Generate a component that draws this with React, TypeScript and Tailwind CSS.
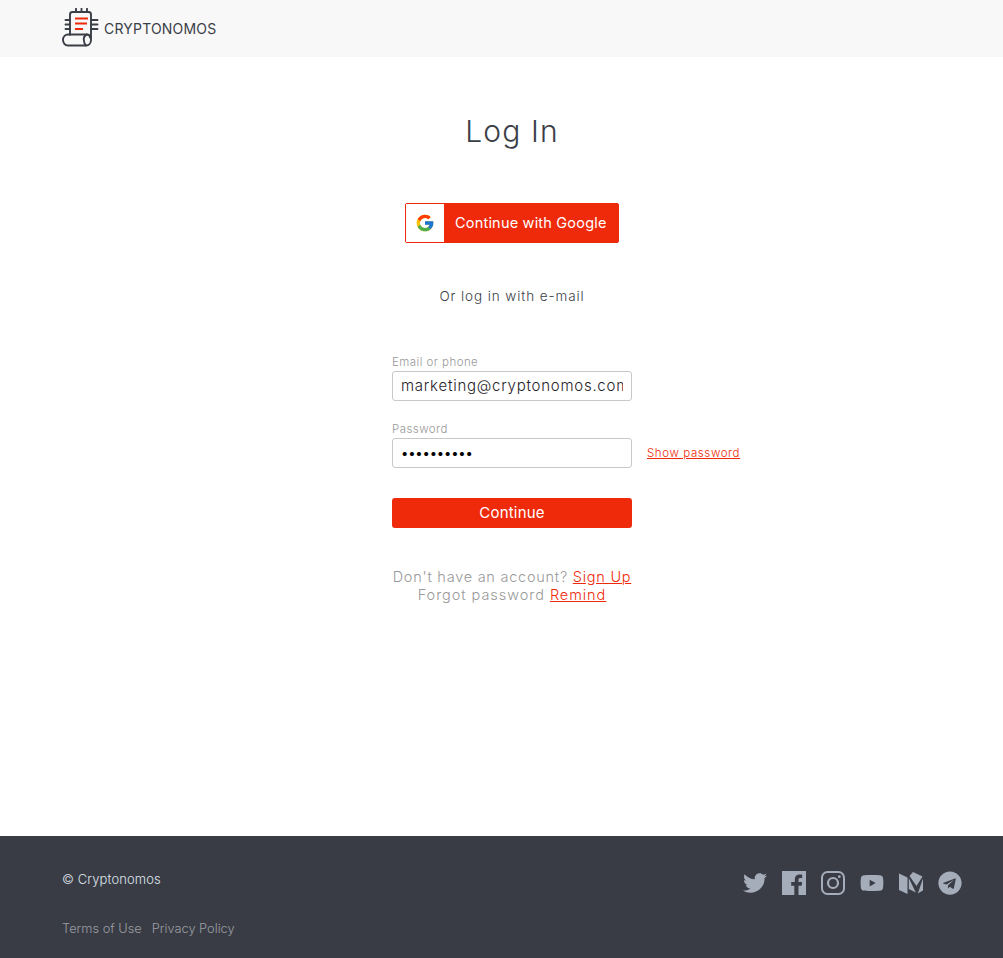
import React from "react";
import { FaTwitter, FaYoutube, FaTelegram } from "react-icons/fa";
import { FcGoogle } from "react-icons/fc";

const Logo = () => (
  <svg width="37" height="39" viewBox="0 0 37 39" fill="none" stroke="#3a3e47" strokeWidth="1.9" strokeLinecap="round" strokeLinejoin="round">
    <path d="M8 27V6.500C8 5 9 4 10.500 4h16C28 4 29 5 29 6.500V32c0 3-2 5.500-5 5.500H6C3 37.500 1 35 1 32s2-5.500 5-5.500h19c2 0 3 1.500 3 3" />
    <path d="M25 26.500c-2.500 1-3.500 3-3.200 5.500.2 2.500 1 4.500 2.200 5.500" />
    <path d="M14 .8V4M19.500 .8V4M25 .8V4M3.500 12H8M3.500 16.500H8M3.500 21H8M29 12h6.500M29 16.500h6.500M29 21h6.500" />
    <path d="M13 10.500h13M13 15.500h12M13 21h8" stroke="#ee2a0a" strokeWidth="2.200" strokeLinecap="butt" />
  </svg>
);

const Facebook = () => (
  <svg width="24" height="24" viewBox="0 0 24 24">
    <path fill="#a6adba" fillRule="evenodd" d="M0 0h24v24H16.500v-9.300h3.100l.5-3.600h-3.600V8.800c0-1 .3-1.800 1.800-1.800h1.900V3.800c-.4 0-1.500-.2-2.800-.2-2.700 0-4.600 1.700-4.600 4.700v2.800H9.200v3.600h3.100V24H0Z" />
  </svg>
);

const Instagram = () => (
  <svg width="24" height="24" viewBox="0 0 24 24" fill="none" stroke="#a6adba" strokeWidth="2">
    <rect x="1" y="1" width="22" height="22" rx="5.500" />
    <circle cx="12" cy="12" r="5" strokeWidth="2.200" />
    <circle cx="18.300" cy="5.700" r="1.400" fill="#a6adba" stroke="none" />
  </svg>
);

const Medium = () => (
  <svg width="24" height="22" viewBox="0 0 24 22" fill="#a6adba">
    <path d="M0 1.500 8.500 5.500V22L0 18Z" />
    <path d="M9.800 6 16.800 20.500 9.800 17Z" />
    <path d="M10.500 4 14 0l9.500 4.500-6 9.500Z" />
    <path d="M24 6.500V18.500L18.800 21.500 24 6.500Z" />
  </svg>
);

export default function App() {
  return (
    <div className="flex min-h-[958px] flex-col bg-white font-['Inter','Liberation_Sans',sans-serif]">
      <header className="flex h-[57px] items-start bg-[#f8f8f8] pt-2 pl-[62px]">
        <Logo />
        <span className="mt-[12px] ml-[5px] text-[14px] leading-[18px] font-normal tracking-[0.2px] text-[#3a3e47]">CRYPTONOMOS</span>
      </header>

      <main className="flex flex-1 flex-col items-center pl-[21px]">
        <h1 className="mt-[54px] text-[30px] leading-[40px] font-light tracking-[1.1px] text-[#3a3e47]">Log In</h1>

        <button className="mt-[52px] flex h-10 w-[214px] items-center rounded-[2px] border border-[#ee2a0a] bg-[#ee2a0a] text-[14.500px] font-normal tracking-[0.2px] text-white">
          <span className="flex h-[38px] w-[38px] shrink-0 items-center justify-center bg-white">
            <FcGoogle size={20} />
          </span>
          <span className="ml-[11px] whitespace-nowrap">Continue with Google</span>
        </button>

        <p className="mt-[43px] text-[13.500px] leading-5 font-light tracking-[0.9px] text-[#3a3e47]">Or log in with e-mail</p>

        <form className="mt-[49px] w-[240px]">
          <label className="block text-[11.500px] leading-[14px] font-light tracking-[0.45px] text-[#999999]">Email or phone</label>
          <div className="mt-[2px] flex h-[30px] items-center overflow-hidden rounded-[3px] border border-[#c8c8c8] pr-2 pl-2">
            <span className="overflow-hidden text-[15px] font-light tracking-[0.75px] whitespace-nowrap text-[#1f2228]">marketing@cryptonomos.com</span>
          </div>

          <div className="relative">
            <label className="mt-[21px] block text-[11.500px] leading-[14px] font-light tracking-[0.45px] text-[#999999]">Password</label>
            <div className="mt-[2px] flex h-[30px] items-center rounded-[3px] border border-[#c8c8c8] pl-2">
              <span className="text-[13px] leading-none tracking-[-0.15px] text-black">••••••••••</span>
            </div>
            <a className="absolute top-[24px] left-[255px] text-[11.500px] leading-[14px] font-light tracking-[0.6px] whitespace-nowrap text-[#ee2a0a] underline">Show password</a>
          </div>

          <button type="button" className="mt-[30px] flex h-[30px] w-full items-center justify-center rounded-[3px] bg-[#ee2a0a] text-[15px] tracking-[0.2px] text-white">Continue</button>
        </form>

        <div className="mt-[40px] text-center text-[14.500px] leading-[18px] font-light tracking-[0.75px] text-[#999999]">
          <p>Don't have an account? <a className="text-[#ee2a0a] underline">Sign Up</a></p>
          <p className="tracking-[0.95px]">Forgot password <a className="text-[#ee2a0a] underline">Remind</a></p>
        </div>
      </main>

      <footer className="flex h-[122px] justify-between bg-[#393c45] pr-[41px] pl-[62px]">
        <div>
          <p className="mt-[34px] text-[13px] leading-[18px] font-light tracking-[0.1px] text-[#dfe3ea]">© Cryptonomos</p>
          <div className="mt-[32px] flex gap-[10px] text-[12.800px] leading-[18px] font-light text-[#9a9ca2]">
            <a>Terms of Use</a>
            <a>Privacy Policy</a>
          </div>
        </div>
        <div className="mt-[35px] flex h-6 items-center gap-[15px] text-[#a6adba]">
          <FaTwitter size={24} />
          <Facebook />
          <Instagram />
          <FaYoutube size={24} />
          <Medium />
          <FaTelegram size={24} />
        </div>
      </footer>
    </div>
  );
}
